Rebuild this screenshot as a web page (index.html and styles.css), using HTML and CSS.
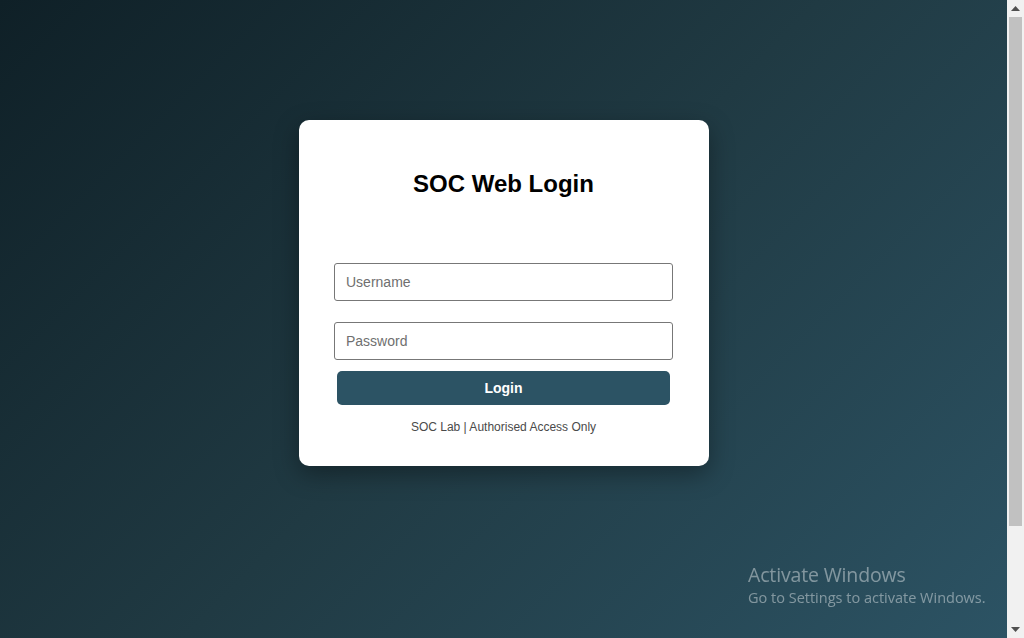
FILE: index.html
```html
<!DOCTYPE html>
<html lang="en">
<head>
<meta charset="utf-8">
<title>SOC Web Login</title>
<link rel="stylesheet" href="styles.css">
</head>
<body>
<div class="app">
  <main class="page">
    <div class="card">
      <h2 class="title">SOC Web Login</h2>
      <form class="form">
        <input class="field" type="text" placeholder="Username">
        <input class="field field-pass" type="password" placeholder="Password">
        <button class="btn" type="button">Login</button>
      </form>
      <p class="foot">SOC Lab | Authorised Access Only</p>
    </div>
  </main>
  <div class="scrollbar">
    <div class="sb-btn">
      <svg width="9" height="5" viewBox="0 0 9 5"><polygon points="0,5 9,5 4.5,0" fill="#505050"/></svg>
    </div>
    <div class="sb-track">
      <div class="sb-thumb"></div>
    </div>
    <div class="sb-btn">
      <svg width="9" height="5" viewBox="0 0 9 5"><polygon points="0,0 9,0 4.5,5" fill="#505050"/></svg>
    </div>
  </div>
</div>
<div class="watermark">
  <div class="wm-title">Activate Windows</div>
  <div class="wm-sub">Go to Settings to activate Windows.</div>
</div>
</body>
</html>
```

FILE: styles.css
```css
html, body {
  margin: 0;
  height: 100%;
  overflow: hidden;
}
body {
  font-family: "Liberation Sans", Arial, sans-serif;
}
.app {
  display: flex;
  height: 638px;
}
.page {
  flex: 1;
  background: linear-gradient(135deg, #0f2027 0%, #203a43 50%, #2c5364 100%);
  padding-top: 120px;
  box-sizing: border-box;
  display: flex;
  justify-content: center;
  align-items: flex-start;
}
.card {
  width: 410px;
  box-sizing: border-box;
  background: #fff;
  border-radius: 10px;
  padding: 50px 35px 32px;
  box-shadow: 0 8px 24px rgba(0, 0, 0, 0.35);
  text-align: center;
}
.title {
  margin: 0;
  font-size: 24px;
  line-height: 28px;
  font-weight: bold;
  color: #000;
}
.form {
  margin-top: 65px;
  display: flex;
  flex-direction: column;
  align-items: center;
}
.field {
  width: 339px;
  height: 38px;
  box-sizing: border-box;
  border: 1px solid #777;
  border-radius: 3px;
  padding: 0 11px;
  font-family: "Liberation Sans", Arial, sans-serif;
  font-size: 14px;
  color: #222;
  background: #fff;
  outline: none;
}
.field::placeholder {
  color: #6f6f6f;
}
.field-pass {
  margin-top: 21px;
}
.btn {
  margin-top: 11px;
  width: 333px;
  height: 34px;
  border: none;
  border-radius: 5px;
  background: #2c5364;
  color: #fff;
  font-family: "Liberation Sans", Arial, sans-serif;
  font-size: 14px;
  font-weight: bold;
}
.foot {
  margin: 15px 0 0;
  font-size: 12px;
  line-height: 14px;
  color: #4a4a4a;
}
.scrollbar {
  width: 17px;
  display: flex;
  flex-direction: column;
  background: #f1f1f1;
}
.sb-btn {
  height: 17px;
  display: flex;
  align-items: center;
  justify-content: center;
}
.sb-track {
  flex: 1;
  display: flex;
  flex-direction: column;
}
.sb-thumb {
  height: 509px;
  margin: 0 2px;
  background: #c1c1c1;
}
.watermark {
  position: fixed;
  left: 748px;
  top: 562px;
  color: rgba(255, 255, 255, 0.42);
  font-family: "Open Sans", "Noto Sans", sans-serif;
  pointer-events: none;
}
.wm-title {
  font-size: 19.5px;
  line-height: 26px;
  letter-spacing: -0.15px;
}
.wm-sub {
  font-size: 14.5px;
  line-height: 20px;
}
```
